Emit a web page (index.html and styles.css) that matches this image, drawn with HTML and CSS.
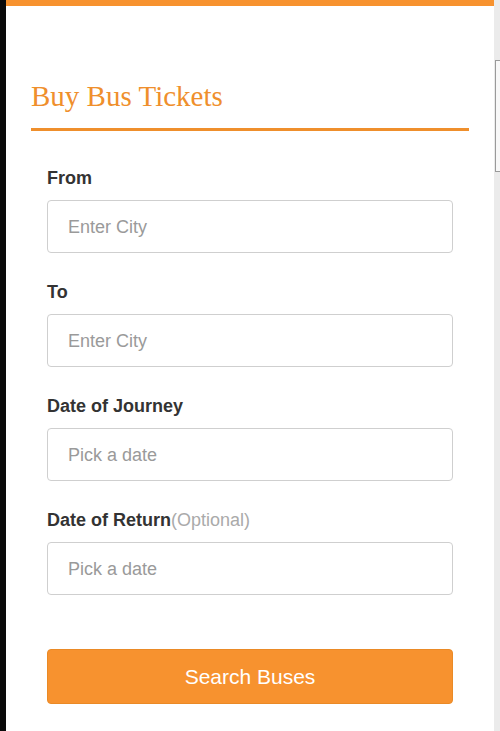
FILE: index.html
```html
<!DOCTYPE html>
<html>
<head>
<meta charset="utf-8">
<link rel="stylesheet" href="styles.css">
</head>
<body>
<div class="frame">
  <div class="edge"></div>
  <div class="main">
    <h1 class="title">Buy Bus Tickets</h1>
    <form class="form">
      <div class="field">
        <label class="label">From</label>
        <input class="input" type="text" placeholder="Enter City">
      </div>
      <div class="field">
        <label class="label">To</label>
        <input class="input" type="text" placeholder="Enter City">
      </div>
      <div class="field">
        <label class="label">Date of Journey</label>
        <input class="input" type="text" placeholder="Pick a date">
      </div>
      <div class="field">
        <label class="label">Date of Return<span class="opt">(Optional)</span></label>
        <input class="input" type="text" placeholder="Pick a date">
      </div>
      <button class="btn" type="button">Search Buses</button>
    </form>
  </div>
  <div class="scrollbar"><div class="thumb"></div></div>
</div>
</body>
</html>
```
FILE: styles.css
```css
html, body {
  margin: 0;
  padding: 0;
  background: #fff;
}
.frame {
  display: flex;
  width: 500px;
  height: 731px;
  overflow: hidden;
}
.edge {
  width: 6px;
  background: #0a0a0a;
  flex: none;
}
.main {
  flex: 1;
  border-top: 6px solid #f7922f;
  padding: 0 25px;
  background: #fff;
}
.title {
  margin: 74px 0 0;
  font-family: "Liberation Serif", "Times New Roman", serif;
  font-weight: normal;
  font-size: 29px;
  line-height: 32px;
  color: #ef8f2c;
  padding: 0 0 16px;
  border-bottom: 3px solid #ef8f2c;
}
.form {
  padding: 37px 16px 0;
  display: flex;
  flex-direction: column;
}
.field {
  display: flex;
  flex-direction: column;
  margin-bottom: 29px;
}
.label {
  font-family: "Liberation Sans", Arial, sans-serif;
  font-weight: bold;
  font-size: 18px;
  line-height: 20px;
  color: #333;
  margin-bottom: 12px;
}
.opt {
  font-weight: normal;
  color: #aaa;
}
.input {
  box-sizing: border-box;
  height: 53px;
  width: 100%;
  border: 1px solid #cfcfcf;
  border-radius: 4px;
  padding: 2px 20px 0;
  font-family: "Liberation Sans", Arial, sans-serif;
  font-size: 18px;
  color: #333;
  background: #fff;
  outline: none;
}
.input::placeholder {
  color: #9a9a9a;
}
.btn {
  margin-top: 25px;
  box-sizing: border-box;
  height: 55px;
  width: 100%;
  border: 1px solid #ea8a26;
  border-radius: 4px;
  background: #f7922f;
  color: #fff;
  font-family: "Liberation Sans", Arial, sans-serif;
  font-size: 21px;
  cursor: pointer;
}
.scrollbar {
  width: 6px;
  flex: none;
  background: #ebebeb;
  display: flex;
  flex-direction: column;
}
.thumb {
  margin-top: 60px;
  margin-left: 1px;
  height: 110px;
  border-left: 1px solid #9a9a9a;
  border-top: 1px solid #9a9a9a;
  border-bottom: 1px solid #9a9a9a;
  background: #f8f8f8;
}
```
